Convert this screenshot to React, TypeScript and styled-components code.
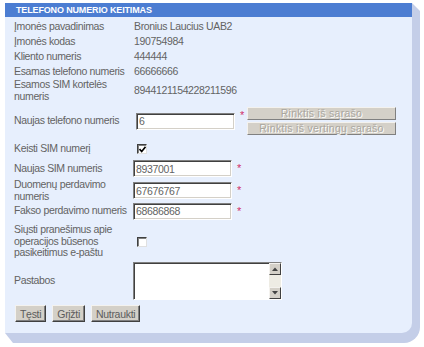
import React from "react";
import styled, { createGlobalStyle } from "styled-components";

const GlobalStyle = createGlobalStyle`
  body {
    margin: 0;
    background: #fff;
    font-family: "Liberation Sans", Arial, sans-serif;
  }
`;

const Shadow = styled.div`
  margin: 3px 0 0 5px;
  width: 407px;
  padding: 0 8px 10px 0;
  background: #c4cee8;
  border-radius: 0 0 16px 0;
  clip-path: polygon(0 0, 407px 0, 100% 8px, 100% 100%, 8px 100%, 0 calc(100% - 10px));
`;

const Panel = styled.div`
  background: #e7effd;
  border-radius: 0 0 10px 0;
  padding-bottom: 11px;
`;

const Header = styled.div`
  height: 14px;
  line-height: 14px;
  background: #4c7dd2;
  color: #fff;
  font-weight: bold;
  font-size: 9px;
  letter-spacing: -0.15px;
  padding-left: 11px;
`;

const Body = styled.div`
  padding: 2px 0 0 9px;
`;

const Row = styled.div<{ $h: number }>`
  display: grid;
  grid-template-columns: 120px 1fr;
  align-items: center;
  height: ${(p) => p.$h}px;
`;

const Text = styled.div`
  font-size: 10.5px;
  line-height: 11.5px;
  letter-spacing: -0.35px;
  color: #636363;
`;

const Field = styled.div`
  display: flex;
  align-items: center;
`;

const Input = styled.input<{ $shift?: number }>`
  box-sizing: border-box;
  width: 99px;
  height: 17px;
  margin: 0 0 0 ${(p) => p.$shift ?? -1}px;
  padding: 0 2px;
  background: #fff;
  border: 1px solid;
  border-color: #808080 #fff #fff #808080;
  box-shadow: inset 1px 1px #404040, inset -1px -1px #d4d0c8;
  font-family: inherit;
  font-size: 10.5px;
  letter-spacing: -0.35px;
  color: #636363;
  outline: none;
`;

const Req = styled.span`
  align-self: flex-start;
  margin: 3px 0 0 5px;
  width: 5px;
  font-size: 11px;
  line-height: 10px;
  color: #d0306a;
`;

const PickStack = styled.div`
  display: flex;
  flex-direction: column;
  gap: 2px;
  margin-left: 2px;
`;

const PickButton = styled.button`
  box-sizing: border-box;
  width: 149px;
  height: 13px;
  padding: 0;
  background: #d4d0c8;
  border: 1px solid;
  border-color: #f4f2ee #808080 #808080 #f4f2ee;
  font-family: inherit;
  font-size: 10.5px;
  line-height: 11px;
  letter-spacing: 0.3px;
  color: #aaa79f;
  text-shadow: 1px 1px 0 #fff;
`;

const Box = styled.span`
  box-sizing: border-box;
  display: flex;
  align-items: center;
  justify-content: center;
  width: 10px;
  height: 10px;
  margin-left: 3px;
  background: #fff;
  border: 1px solid;
  border-color: #404040 #e0e0e0 #e0e0e0 #404040;
  box-shadow: inset 1px 1px #808080;
`;

const NoteBox = styled.div`
  box-sizing: border-box;
  display: flex;
  width: 149px;
  height: 38px;
  margin-left: -1px;
  border: 1px solid;
  border-color: #808080 #fff #fff #808080;
  box-shadow: inset 1px 1px #404040;
  background: #fff;
`;

const NoteArea = styled.textarea`
  flex: 1;
  border: none;
  resize: none;
  background: transparent;
  margin: 1px 0 0 1px;
  outline: none;
`;

const ScrollTrack = styled.div`
  display: flex;
  flex-direction: column;
  justify-content: space-between;
  width: 12px;
  background: #eeece4;
`;

const ScrollBtn = styled.div`
  box-sizing: border-box;
  display: flex;
  align-items: center;
  justify-content: center;
  height: 12px;
  background: #d4d0c8;
  border: 1px solid;
  border-color: #f4f2ee #404040 #404040 #f4f2ee;
`;

const Actions = styled.div`
  display: flex;
  gap: 6px;
  margin: 5px 0 0 1px;
`;

const ActionButton = styled.button`
  box-sizing: border-box;
  height: 17px;
  padding: 0 4px;
  background: #d4d0c8;
  border: 1px solid;
  border-color: #f4f2ee #404040 #404040 #f4f2ee;
  box-shadow: inset -1px -1px #808080;
  font-family: inherit;
  font-size: 10.5px;
  letter-spacing: -0.3px;
  color: #5c5c5c;
`;

const Checkbox = ({ checked }: { checked?: boolean }) => (
  <Box>
    {checked && (
      <svg width="7" height="7" viewBox="0 0 7 7">
        <path d="M0.5 3 L2.7 5.5 L6.5 0.8" fill="none" stroke="#000" strokeWidth="1.6" />
      </svg>
    )}
  </Box>
);

const Arrow = ({ up }: { up?: boolean }) => (
  <svg width="6" height="4" viewBox="0 0 6 4">
    <path d={up ? "M0 4 L3 0.5 L6 4 Z" : "M0 0 L3 3.5 L6 0 Z"} fill="#444" />
  </svg>
);

const info = [
  ["Įmonės pavadinimas", "Bronius Laucius UAB2"],
  ["Įmonės kodas", "190754984"],
  ["Kliento numeris", "444444"],
  ["Esamas telefono numeris", "66666666"],
];

export default function App() {
  return (
    <>
      <GlobalStyle />
      <Shadow>
        <Panel>
          <Header>TELEFONO NUMERIO KEITIMAS</Header>
          <Body>
            {info.map(([label, value]) => (
              <Row $h={15} key={label}>
                <Text>{label}</Text>
                <Text>{value}</Text>
              </Row>
            ))}
            <Row $h={23}>
              <Text>Esamos SIM kortelės numeris</Text>
              <Text>8944121154228211596</Text>
            </Row>
            <Row $h={38}>
              <Text>Naujas telefono numeris</Text>
              <Field>
                <Input $shift={2} defaultValue="6" />
                <Req>*</Req>
                <PickStack>
                  <PickButton disabled>Rinktis iš sąrašo</PickButton>
                  <PickButton disabled>Rinktis iš vertingų sąrašo</PickButton>
                </PickStack>
              </Field>
            </Row>
            <Row $h={18}>
              <Text>Keisti SIM numerį</Text>
              <Field>
                <Checkbox checked />
              </Field>
            </Row>
            <Row $h={21}>
              <Text>Naujas SIM numeris</Text>
              <Field>
                <Input defaultValue="8937001" />
                <Req>*</Req>
              </Field>
            </Row>
            <Row $h={22}>
              <Text>Duomenų perdavimo numeris</Text>
              <Field>
                <Input defaultValue="67676767" />
                <Req>*</Req>
              </Field>
            </Row>
            <Row $h={20}>
              <Text>Fakso perdavimo numeris</Text>
              <Field>
                <Input defaultValue="68686868" />
                <Req>*</Req>
              </Field>
            </Row>
            <Row $h={41}>
              <Text>Siųsti pranešimus apie operacijos būsenos pasikeitimus e-paštu</Text>
              <Field>
                <Checkbox />
              </Field>
            </Row>
            <Row $h={38}>
              <Text>Pastabos</Text>
              <NoteBox>
                <NoteArea />
                <ScrollTrack>
                  <ScrollBtn>
                    <Arrow up />
                  </ScrollBtn>
                  <ScrollBtn>
                    <Arrow />
                  </ScrollBtn>
                </ScrollTrack>
              </NoteBox>
            </Row>
            <Actions>
              <ActionButton>Tęsti</ActionButton>
              <ActionButton>Grįžti</ActionButton>
              <ActionButton>Nutraukti</ActionButton>
            </Actions>
          </Body>
        </Panel>
      </Shadow>
    </>
  );
}
